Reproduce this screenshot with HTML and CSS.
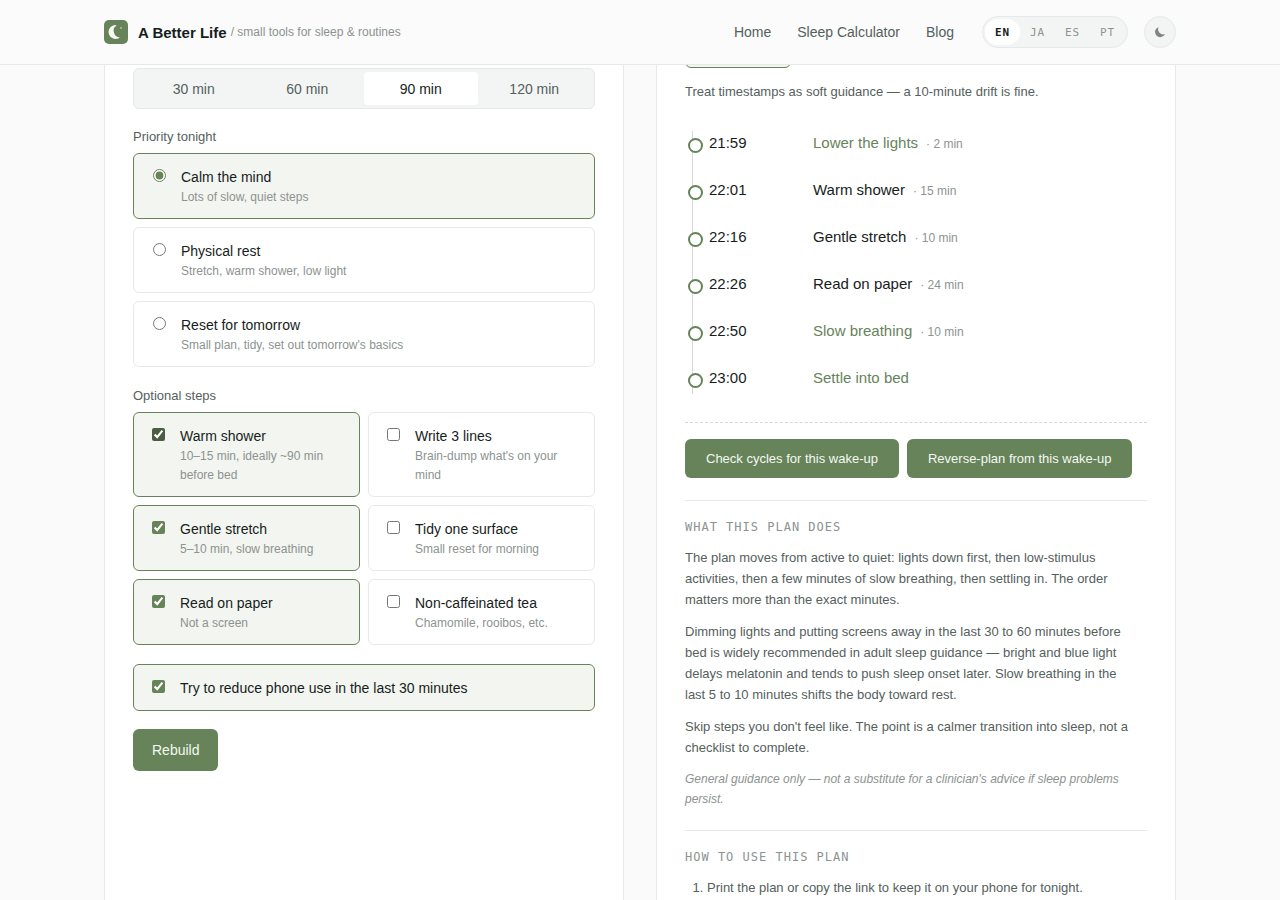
FILE: index.html
```html
<!DOCTYPE html>
<html lang="en">
<head>
    <meta charset="UTF-8">
    <meta name="viewport" content="width=device-width, initial-scale=1.0">
    <title>A Better Life</title>
    <link rel="stylesheet" href="styles.css">
</head>
<body>
    <header class="site-header">
        <div class="header-inner">
            <a class="brand" href="#">
                <svg class="brand-logo" viewBox="0 0 24 24" aria-hidden="true">
                    <rect width="24" height="24" rx="5" fill="#67835a"/>
                    <path d="M12.6 5.2A6.9 6.9 0 1 0 15.8 17.4A6.7 6.7 0 0 1 12.6 5.2Z" fill="#f6faf3"/>
                    <circle cx="17" cy="8" r="0.8" fill="#dfe9d9"/>
                </svg>
                <span class="brand-name">A Better Life</span>
                <span class="brand-tag">/ small tools for sleep &amp; routines</span>
            </a>
            <nav class="site-nav">
                <a href="#">Home</a>
                <a href="#">Sleep Calculator</a>
                <a href="#">Blog</a>
            </nav>
            <div class="lang-switch">
                <button type="button" class="active">EN</button>
                <button type="button">JA</button>
                <button type="button">ES</button>
                <button type="button">PT</button>
            </div>
            <button type="button" class="theme-toggle">
                <svg viewBox="0 0 16 16" width="14" height="14" aria-hidden="true">
                    <path d="M6.4 2.2A6 6 0 1 0 13.8 10.4A6 6 0 0 1 6.4 2.2Z" fill="#7d8683"/>
                </svg>
            </button>
        </div>
    </header>

    <main class="layout">
        <form class="panel form-panel">
            <div class="segmented">
                <button type="button">30 min</button>
                <button type="button">60 min</button>
                <button type="button" class="active">90 min</button>
                <button type="button">120 min</button>
            </div>

            <fieldset class="field">
                <legend>Priority tonight</legend>
                <div class="option-list">
                    <label class="option selected">
                        <input type="radio" name="priority" checked>
                        <span class="option-text">
                            <span class="option-title">Calm the mind</span>
                            <span class="option-hint">Lots of slow, quiet steps</span>
                        </span>
                    </label>
                    <label class="option">
                        <input type="radio" name="priority">
                        <span class="option-text">
                            <span class="option-title">Physical rest</span>
                            <span class="option-hint">Stretch, warm shower, low light</span>
                        </span>
                    </label>
                    <label class="option">
                        <input type="radio" name="priority">
                        <span class="option-text">
                            <span class="option-title">Reset for tomorrow</span>
                            <span class="option-hint">Small plan, tidy, set out tomorrow's basics</span>
                        </span>
                    </label>
                </div>
            </fieldset>

            <fieldset class="field">
                <legend>Optional steps</legend>
                <div class="option-grid">
                    <label class="option selected">
                        <input type="checkbox" class="strong" checked>
                        <span class="option-text">
                            <span class="option-title">Warm shower</span>
                            <span class="option-hint">10–15 min, ideally ~90 min before bed</span>
                        </span>
                    </label>
                    <label class="option">
                        <input type="checkbox">
                        <span class="option-text">
                            <span class="option-title">Write 3 lines</span>
                            <span class="option-hint">Brain-dump what's on your mind</span>
                        </span>
                    </label>
                    <label class="option selected">
                        <input type="checkbox" checked>
                        <span class="option-text">
                            <span class="option-title">Gentle stretch</span>
                            <span class="option-hint">5–10 min, slow breathing</span>
                        </span>
                    </label>
                    <label class="option">
                        <input type="checkbox">
                        <span class="option-text">
                            <span class="option-title">Tidy one surface</span>
                            <span class="option-hint">Small reset for morning</span>
                        </span>
                    </label>
                    <label class="option selected">
                        <input type="checkbox" checked>
                        <span class="option-text">
                            <span class="option-title">Read on paper</span>
                            <span class="option-hint">Not a screen</span>
                        </span>
                    </label>
                    <label class="option">
                        <input type="checkbox">
                        <span class="option-text">
                            <span class="option-title">Non-caffeinated tea</span>
                            <span class="option-hint">Chamomile, rooibos, etc.</span>
                        </span>
                    </label>
                </div>
            </fieldset>

            <label class="option selected">
                <input type="checkbox" checked>
                <span class="option-text">
                    <span class="option-title">Try to reduce phone use in the last 30 minutes</span>
                </span>
            </label>

            <button type="button" class="btn">Rebuild</button>
        </form>

        <section class="panel plan-panel">
            <div class="plan-chip"></div>
            <p class="plan-note">Treat timestamps as soft guidance — a 10-minute drift is fine.</p>

            <ol class="timeline">
                <li class="quiet"><time>21:59</time><span class="step">Lower the lights</span><span class="mins">· 2 min</span></li>
                <li><time>22:01</time><span class="step">Warm shower</span><span class="mins">· 15 min</span></li>
                <li><time>22:16</time><span class="step">Gentle stretch</span><span class="mins">· 10 min</span></li>
                <li><time>22:26</time><span class="step">Read on paper</span><span class="mins">· 24 min</span></li>
                <li class="quiet"><time>22:50</time><span class="step">Slow breathing</span><span class="mins">· 10 min</span></li>
                <li class="quiet"><time>23:00</time><span class="step">Settle into bed</span></li>
            </ol>

            <div class="plan-links">
                <a class="btn btn-small" href="#">Check cycles for this wake-up</a>
                <a class="btn btn-small" href="#">Reverse-plan from this wake-up</a>
            </div>

            <div class="plan-section">
                <h2>WHAT THIS PLAN DOES</h2>
                <p>The plan moves from active to quiet: lights down first, then low-stimulus activities, then a few minutes of slow breathing, then settling in. The order matters more than the exact minutes.</p>
                <p>Dimming lights and putting screens away in the last 30 to 60 minutes before bed is widely recommended in adult sleep guidance — bright and blue light delays melatonin and tends to push sleep onset later. Slow breathing in the last 5 to 10 minutes shifts the body toward rest.</p>
                <p>Skip steps you don't feel like. The point is a calmer transition into sleep, not a checklist to complete.</p>
                <p class="disclaimer">General guidance only — not a substitute for a clinician's advice if sleep problems persist.</p>
            </div>

            <div class="plan-section">
                <h2>HOW TO USE THIS PLAN</h2>
                <ol class="how-to">
                    <li>Print the plan or copy the link to keep it on your phone for tonight.</li>
                </ol>
            </div>
        </section>
    </main>
</body>
</html>
```

FILE: styles.css
```css
:root {
    --green: #67835a;
    --green-soft: #f2f5f0;
    --text: #161d1c;
    --text-mid: #55605d;
    --text-faint: #8c9390;
    --line: #e6e9e8;
    --bg: #fafafa;
    --mono: "DejaVu Sans Mono", monospace;
}

*,
*::before {
    box-sizing: border-box;
}

body {
    margin: 0;
    font-family: "Liberation Sans", Arial, sans-serif;
    font-size: 14px;
    color: var(--text);
    background: var(--bg);
}

a {
    color: inherit;
    text-decoration: none;
}

button {
    font: inherit;
    color: inherit;
    border: none;
    background: none;
    padding: 0;
    cursor: pointer;
}

/* Header */
.site-header {
    position: sticky;
    top: 0;
    z-index: 10;
    background: #fafbfa;
    border-bottom: 1px solid var(--line);
}

.header-inner {
    display: flex;
    align-items: center;
    gap: 16px;
    max-width: 1120px;
    height: 64px;
    margin: 0 auto;
    padding: 0 24px;
}

.brand {
    display: flex;
    align-items: center;
    margin-right: auto;
}

.brand-logo {
    width: 24px;
    height: 24px;
    margin-right: 10px;
}

.brand-name {
    font-size: 15px;
    font-weight: 600;
    margin-right: 4px;
}

.brand-tag {
    font-size: 12px;
    color: var(--text-faint);
}

.site-nav {
    display: flex;
    gap: 26px;
    margin-right: 12px;
    color: var(--text-mid);
}

.lang-switch {
    display: flex;
    padding: 2px;
    border: 1px solid var(--line);
    border-radius: 16px;
    background: #f3f5f4;
}

.lang-switch button {
    width: 35px;
    height: 26px;
    border-radius: 13px;
    font-family: var(--mono);
    font-size: 11px;
    letter-spacing: 1px;
    color: var(--text-faint);
}

.lang-switch .active {
    background: #fff;
    color: var(--text);
    font-weight: bold;
}

.theme-toggle {
    display: grid;
    place-items: center;
    width: 32px;
    height: 32px;
    border: 1px solid var(--line);
    border-radius: 50%;
    background: #f3f5f4;
}

/* Panels */
.layout {
    display: grid;
    grid-template-columns: 1fr 1fr;
    gap: 32px;
    max-width: 1120px;
    margin: 0 auto;
    padding: 0 24px;
}

.panel {
    min-width: 0;
    padding: 3px 28px 28px;
    background: #fff;
    border: 1px solid var(--line);
    border-top: none;
}

.form-panel {
    display: flex;
    flex-direction: column;
    gap: 18px;
}

.segmented {
    display: grid;
    grid-template-columns: repeat(4, 1fr);
    padding: 3px;
    border: 1px solid var(--line);
    border-radius: 6px;
    background: #f3f5f4;
}

.segmented button {
    height: 33px;
    border-radius: 4px;
    font-size: 14px;
    color: var(--text-mid);
}

.segmented .active {
    background: #fff;
    color: var(--text);
}

.field {
    min-width: 0;
    margin: 0 0 1px;
    padding: 0;
    border: none;
}

.field legend {
    padding: 0;
    margin-bottom: 6px;
    font-size: 13px;
    line-height: 20px;
    color: var(--text-mid);
}

.option-list {
    display: grid;
    gap: 8px;
}

.option-grid {
    display: grid;
    grid-template-columns: 1fr 1fr;
    gap: 8px;
}

.option {
    display: flex;
    align-items: flex-start;
    gap: 12px;
    padding: 12px 14px 11px;
    border: 1px solid var(--line);
    border-radius: 6px;
    background: #fff;
}

.option.selected {
    border-color: var(--green);
    background: var(--green-soft);
}

.option input {
    flex: none;
    accent-color: var(--green);
}

.option .strong {
    accent-color: #4b5d41;
}

.option-title {
    display: block;
    line-height: 22px;
}

.option-hint {
    display: block;
    font-size: 12px;
    line-height: 19px;
    color: var(--text-faint);
}

.btn {
    align-self: flex-start;
    padding: 0 19px;
    border-radius: 6px;
    line-height: 42px;
    background: var(--green);
    color: #f4f9f1;
}

.btn-small {
    padding: 0 21px;
    font-size: 13px;
    line-height: 39px;
}

/* Plan */

/* mostly tucked under the sticky header */
.plan-chip {
    width: 106px;
    height: 36px;
    margin-top: -36px;
    border: 1px solid var(--green);
    border-radius: 6px;
    background: var(--green-soft);
}

.plan-note {
    margin: 13px 0 29px;
    font-size: 13px;
    line-height: 21px;
    color: var(--text-mid);
}

.timeline {
    position: relative;
    margin: 0 0 28px;
    padding: 0 0 0 3px;
    list-style: none;
}

.timeline::before {
    content: "";
    position: absolute;
    left: 7px;
    top: 0;
    bottom: 0;
    width: 1px;
    background: #d5dad8;
}

.timeline li {
    display: flex;
    align-items: baseline;
    height: 47px;
    font-size: 15px;
    line-height: 24px;
}

.timeline li:last-child {
    height: 28px;
}

.timeline li::before {
    content: "";
    position: relative;
    align-self: flex-start;
    width: 15px;
    height: 15px;
    margin: 7px 6px 0 0;
    border: 2px solid var(--green);
    border-radius: 50%;
    background: #fff;
}

.timeline time {
    width: 104px;
    font-variant-numeric: tabular-nums;
}

.timeline .quiet .step {
    color: var(--green);
}

.timeline .mins {
    margin-left: 8px;
    font-size: 12px;
    color: var(--text-faint);
}

.plan-links {
    display: flex;
    flex-wrap: wrap;
    gap: 8px;
    padding: 16px 0 22px;
    border-top: 1px dashed #d3d8d6;
}

.plan-section {
    padding: 17px 0 21px;
    border-top: 1px solid var(--line);
    font-size: 13px;
    line-height: 21px;
    color: var(--text-mid);
}

.plan-section h2 {
    margin: 0 0 11px;
    font-family: var(--mono);
    font-size: 12px;
    font-weight: normal;
    line-height: 18px;
    letter-spacing: 1px;
    color: var(--text-faint);
}

.plan-section p {
    margin: 0 0 11px;
    padding-right: 10px;
}

.plan-section .disclaimer {
    margin: 0;
    font-size: 12px;
    line-height: 20px;
    font-style: italic;
    color: var(--text-faint);
}

.how-to {
    margin: 0;
    padding-left: 22px;
}
```
